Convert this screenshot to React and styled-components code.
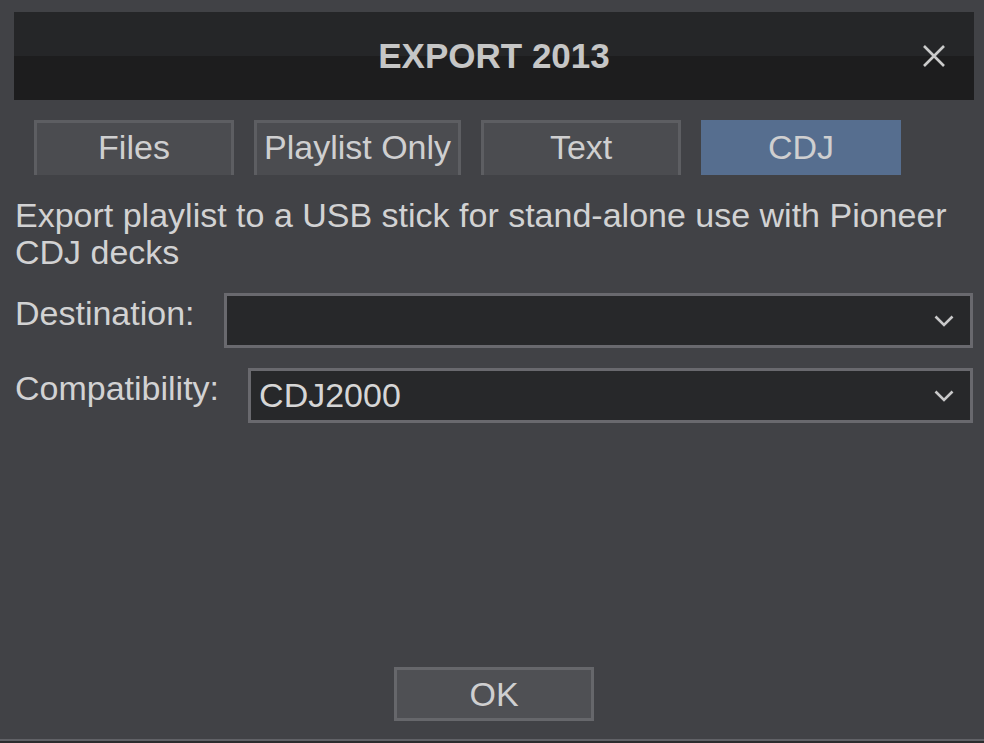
import styled, { createGlobalStyle } from 'styled-components'

const GlobalStyle = createGlobalStyle`
    html, body {
        margin: 0;
        padding: 0;
        background: #414246;
    }
    #root {
        height: 100vh;
    }
    * {
        box-sizing: border-box;
    }
`

const Dialog = styled.div`
    display: flex;
    flex-direction: column;
    height: 100vh;
    background: #414246;
    font-family: "Liberation Sans", Arial, sans-serif;
    color: #d2d2d3;
    font-size: 34px;
    overflow: hidden;
`

const Header = styled.div`
    margin: 12px 10px 0 14px;
    height: 88px;
    display: grid;
    grid-template-columns: 1fr auto 1fr;
    align-items: center;
    background: linear-gradient(#252628 50%, #1d1d1e 50%);
`

const Title = styled.h1`
    grid-column: 2;
    margin: 0;
    font-size: 35px;
    font-weight: bold;
    color: #c6c6c6;
`

const CloseButton = styled.button`
    grid-column: 3;
    justify-self: end;
    margin-right: 28px;
    width: 24px;
    height: 24px;
    padding: 0;
    border: none;
    background: none;
    display: flex;
    align-items: center;
    justify-content: center;
    cursor: pointer;
`

const Tabs = styled.div`
    display: flex;
    gap: 20px;
    margin-top: 20px;
    padding-left: 34px;
`

const Tab = styled.div`
    min-width: 200px;
    height: 55px;
    padding: 0 7px 3px;
    display: flex;
    align-items: center;
    justify-content: center;
    border: 3px solid;
    border-bottom: none;
    background: ${({ $active }) => ($active ? '#566e8f' : '#4b4c50')};
    border-color: ${({ $active }) => ($active ? '#566e8f' : '#5d5e62')};
    color: #cfcfd0;
    font-size: 34px;
`

const Description = styled.p`
    margin: 22px 20px 0 15px;
    line-height: 37px;
`

const FieldRow = styled.div`
    display: flex;
    align-items: flex-start;
    margin: ${({ $top }) => $top}px 11px 0 15px;
`

const Label = styled.label`
    padding-top: 1px;
    line-height: 38px;
    margin-right: 29px;
    white-space: nowrap;
`

const Select = styled.div`
    flex: 1;
    height: 55px;
    display: flex;
    align-items: center;
    justify-content: space-between;
    padding: 0 16px 0 8px;
    background: #27282a;
    border: 3px solid #69696e;
    color: #d6d6d6;
    font-size: 34px;
`

const Footer = styled.div`
    margin-top: auto;
    display: flex;
    justify-content: center;
    padding: 0 10px 18px 14px;
`

const OkButton = styled.button`
    width: 200px;
    height: 54px;
    background: #4f5054;
    border: 3px solid #66676b;
    color: #cfcfd0;
    font-family: "Liberation Sans", Arial, sans-serif;
    font-size: 34px;
    cursor: pointer;
`

const BottomEdge = styled.div`
    height: 4px;
    border-top: 2px solid #606166;
    background: #2c2c2e;
`

const Chevron = () => (
    <svg width="20" height="12" viewBox="0 0 20 12">
        <path d="M1.5 1.5 L10 10 L18.5 1.5" fill="none" stroke="#c9c9ca" strokeWidth="2.6" />
    </svg>
)

const CloseIcon = () => (
    <svg width="24" height="24" viewBox="0 0 24 24">
        <path d="M2 2 L22 22 M22 2 L2 22" stroke="#cbcbcb" strokeWidth="2.6" />
    </svg>
)

const tabs = ['Files', 'Playlist Only', 'Text', 'CDJ']

const App = () => {
    return (
        <>
            <GlobalStyle />
            <Dialog>
                <Header>
                    <Title>EXPORT 2013</Title>
                    <CloseButton aria-label="close"><CloseIcon /></CloseButton>
                </Header>
                <Tabs>
                    {tabs.map(t => (
                        <Tab key={t} $active={t === 'CDJ'}>{t}</Tab>
                    ))}
                </Tabs>
                <Description>
                    Export playlist to a USB stick for stand-alone use with Pioneer CDJ decks
                </Description>
                <FieldRow $top={22}>
                    <Label>Destination:</Label>
                    <Select>
                        <span></span>
                        <Chevron />
                    </Select>
                </FieldRow>
                <FieldRow $top={20}>
                    <Label>Compatibility:</Label>
                    <Select>
                        <span>CDJ2000</span>
                        <Chevron />
                    </Select>
                </FieldRow>
                <Footer>
                    <OkButton>OK</OkButton>
                </Footer>
                <BottomEdge />
            </Dialog>
        </>
    )
}

export default App
